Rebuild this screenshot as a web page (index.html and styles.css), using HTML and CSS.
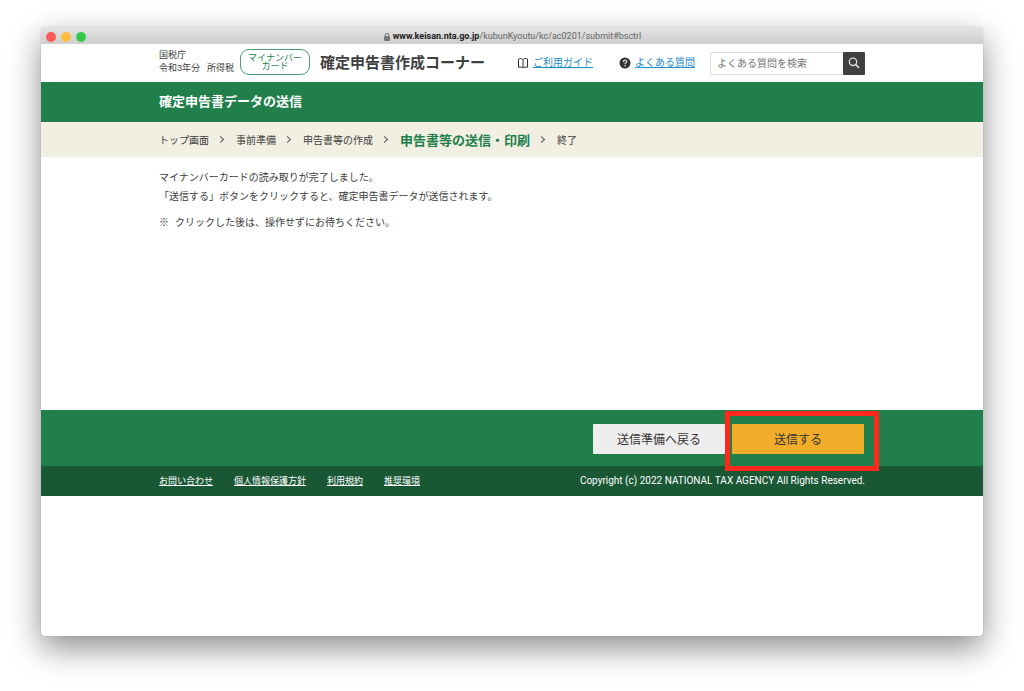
FILE: index.html
```
<!DOCTYPE html>
<html lang="ja">
<head>
<meta charset="utf-8">
<meta name="viewport" content="width=device-width, initial-scale=1">
<title>確定申告書作成コーナー</title>
<link rel="stylesheet" href="styles.css">
</head>
<body>
<div class="window">
  <div class="titlebar">
    <div class="lights">
      <span class="light light-close"></span>
      <span class="light light-min"></span>
      <span class="light light-max"></span>
    </div>
    <div class="address">
      <svg class="lock" viewBox="0 0 8 10" aria-hidden="true"><rect x="1" y="4" width="6" height="5" rx="1" fill="#777"/><path d="M2.3 4.500V3a1.700 1.700 0 0 1 3.400 0v1.500" fill="none" stroke="#777"/></svg>
      <span><strong>www.keisan.nta.go.jp</strong>/kubunKyoutu/kc/ac0201/submit#bsctrl</span>
    </div>
  </div>

  <header class="header">
    <div class="container header-row">
      <div class="agency">国税庁<br>令和3年分<span class="tax">所得税</span></div>
      <div class="badge">マイナンバー<br>カード</div>
      <h1 class="site-title">確定申告書作成コーナー</h1>
      <nav class="links">
        <a class="help-link" href="#">
          <svg class="icon" viewBox="0 0 12 12" fill="none" stroke="#333" aria-hidden="true"><path d="M6 2.800C5.300 1.300 2.500 1.200 1.500 2v8.200H4.700M6 2.800C6.700 1.300 9.500 1.200 10.500 2v8.200H7.300M6 2.800v7.700M4.500 10.200c.7 0 1 .3 1.500.8.500-.5.800-.8 1.500-.8"/></svg>
          <span class="link-text">ご利用ガイド</span>
        </a>
        <a class="help-link" href="#">
          <svg class="icon" viewBox="0 0 12 12" aria-hidden="true"><circle cx="6" cy="6" r="5.500" fill="#333"/><path d="M4.400 4.900c0-2.400 3.300-2.200 3.300-.2C7.700 5.900 6 5.800 6 7.200" fill="none" stroke="#ddd" stroke-width="1.200"/><circle cx="6" cy="8.800" r=".8" fill="#ddd"/></svg>
          <span class="link-text">よくある質問</span>
        </a>
      </nav>
      <form class="search">
        <input class="search-input" type="text" placeholder="よくある質問を検索" aria-label="よくある質問を検索">
        <button class="search-button" type="button" aria-label="検索">
          <svg class="icon" viewBox="0 0 12 12" fill="none" stroke="#ddd" aria-hidden="true"><circle cx="5" cy="4.800" r="3.700" stroke-width="1.300"/><path d="M7.700 7.500l3.300 3.300" stroke-width="1.700"/></svg>
        </button>
      </form>
    </div>
  </header>

  <div class="band">
    <h2 class="container band-title">確定申告書データの送信</h2>
  </div>

  <nav class="crumbs" aria-label="手順">
    <ol class="container steps">
      <li class="step">トップ画面</li>
      <li class="step">事前準備</li>
      <li class="step">申告書等の作成</li>
      <li class="step step-current" aria-current="step">申告書等の送信・印刷</li>
      <li class="step">終了</li>
    </ol>
  </nav>

  <main class="main">
    <div class="container">
      <p class="text">マイナンバーカードの読み取りが完了しました。<br>「送信する」ボタンをクリックすると、確定申告書データが送信されます。</p>
      <p class="text note"><span>※</span><span>クリックした後は、操作せずにお待ちください。</span></p>
    </div>
  </main>

  <div class="actions">
    <div class="container action-row">
      <button class="button button-back" type="button">送信準備へ戻る</button>
      <div class="submit-wrap">
        <button class="button button-submit" type="button">送信する</button>
        <span class="highlight"></span>
      </div>
    </div>
  </div>

  <footer class="footer">
    <div class="container footer-row">
      <nav class="footer-links">
        <a href="#">お問い合わせ</a>
        <a href="#">個人情報保護方針</a>
        <a href="#">利用規約</a>
        <a href="#">推奨環境</a>
      </nav>
      <small class="copyright">Copyright (c) 2022 NATIONAL TAX AGENCY All Rights Reserved.</small>
    </div>
  </footer>
</div>
</body>
</html>
```
FILE: styles.css
```
* { box-sizing: border-box; }

body {
  margin: 0;
  min-height: 100vh;
  padding: 27px 41px 55px;
  display: flex;
  background: #fff;
  color: #404040;
  font-family: "Liberation Sans", "Noto Sans CJK JP", sans-serif;
  font-size: 10px;
}

h1, h2, p, ol { margin: 0; padding: 0; }
button, input { font-family: inherit; }

.window {
  flex: 1;
  min-width: 0;
  background: #fff;
  border-radius: 4px;
  box-shadow: 0 0 1px rgba(0, 0, 0, 0.4), 0 12px 32px rgba(0, 0, 0, 0.45);
}

.container {
  width: 100%;
  max-width: 706px;
  margin: 0 auto;
}

.titlebar {
  display: grid;
  grid-template-columns: 1fr auto 1fr;
  align-items: center;
  height: 17px;
  padding: 0 5px;
  border-radius: 4px 4px 0 0;
  background: linear-gradient(#e4e4e4, #cecece);
}

.lights { display: flex; gap: 5px; }
.light { width: 10px; height: 10px; border-radius: 50%; }
.light-close { background: #fc5b57; }
.light-min { background: #fdbc40; }
.light-max { background: #34c84a; }

.address {
  display: flex;
  align-items: center;
  gap: 2px;
  color: #666;
  font-family: Roboto, sans-serif;
  font-size: 9px;
  line-height: 19px;
}
.address strong { color: #222; font-weight: 700; }
.lock { width: 8px; height: 10px; }

.header-row {
  display: flex;
  align-items: center;
  height: 38px;
}

.agency { padding-bottom: 2px; font-size: 9px; line-height: 13px; white-space: nowrap; }
.tax { margin-left: 7px; }

.badge {
  width: 70px;
  margin: 0 10px 3px 6px;
  padding: 4px 0;
  border: 1px solid #4a9c72;
  border-radius: 9px;
  color: #217f4c;
  font-size: 9px;
  line-height: 8px;
  text-align: center;
}

.site-title { font-size: 15px; line-height: 22px; white-space: nowrap; }

.links {
  display: flex;
  gap: 26px;
  margin-left: auto;
  margin-right: 15px;
}
.help-link {
  display: flex;
  align-items: center;
  gap: 4px;
  color: #1f8ccb;
  line-height: 14px;
  text-decoration: none;
  white-space: nowrap;
}
.link-text { text-decoration: underline; }
.icon { display: block; width: 12px; height: 12px; }

.search { display: flex; width: 155px; height: 23px; }
.search-input {
  flex: 1;
  min-width: 0;
  padding: 0 6px;
  border: 1px solid #ddd;
  border-right: 0;
  border-radius: 0;
  font-size: 10px;
}
.search-input::placeholder { color: #777; }
.search-button {
  display: grid;
  place-items: center;
  width: 22px;
  padding: 0;
  border: 0;
  border-radius: 1px;
  background: #404040;
}

.band { background: #217f4c; color: #fff; }
.band-title { font-size: 13px; line-height: 40px; }

.crumbs { background: #f1eee2; }
.steps {
  display: flex;
  align-items: center;
  height: 35px;
  list-style: none;
}
.step { display: flex; align-items: center; white-space: nowrap; }
.step + .step::before {
  content: "";
  width: 4px;
  height: 4px;
  margin: 0 13px 0 9px;
  border: solid #555;
  border-width: 1px 1px 0 0;
  transform: rotate(45deg);
}
.step-current { color: #217f4c; font-size: 13px; font-weight: 700; }

.main { min-height: 253px; padding-top: 11px; }
.text { line-height: 19px; }
.note { display: flex; gap: 6px; margin-top: 7px; }

.actions { background: #217f4c; }
.action-row {
  display: flex;
  justify-content: flex-end;
  gap: 7px;
  padding: 14px 1px 12px 0;
}
.button {
  width: 132px;
  height: 30px;
  padding: 0 0 2px;
  border: 0;
  border-radius: 1px;
  color: #333;
  font-size: 12px;
}
.button-back { background: #eee; }
.button-submit { display: block; background: #f1ad2a; }
.submit-wrap { position: relative; }
.highlight {
  position: absolute;
  inset: -13px -15px -17px -7px;
  border: 5px solid #fe281c;
  pointer-events: none;
}

.footer { background: #195735; color: #fff; }
.footer-row {
  display: flex;
  align-items: center;
  justify-content: space-between;
  height: 30px;
  padding-bottom: 2px;
}
.footer-links { display: flex; gap: 21px; font-size: 9px; }
.footer-links a { color: inherit; }
.copyright { font-family: Roboto, sans-serif; font-size: 10px; }
```
